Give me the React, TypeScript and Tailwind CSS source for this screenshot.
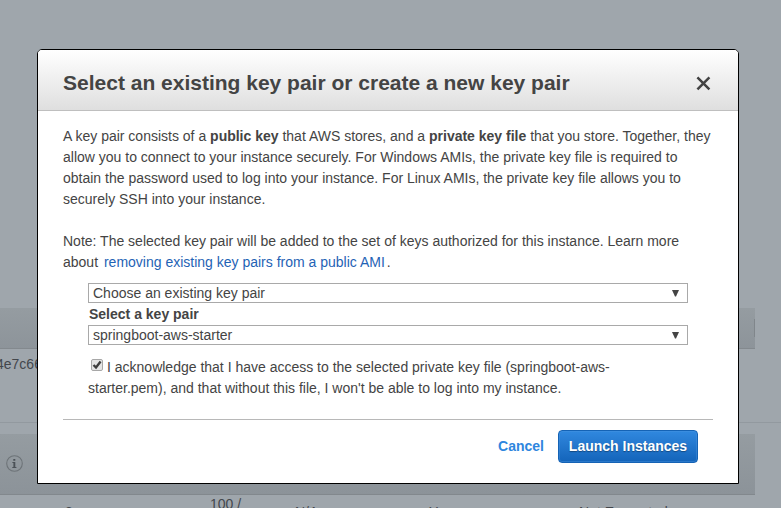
import React from 'react';

const cellText = 'whitespace-nowrap text-[14px] leading-4 text-[#43474c]';

function Backdrop() {
  return (
    <div className="flex h-full flex-col bg-[#9fa6ac]">
      <div className="h-[308px] shrink-0" />
      <div className="flex h-[41px] w-[755px] shrink-0 items-center justify-end border-b border-[#83898e] bg-gradient-to-b from-[#959ca1] to-[#8d949a]">
        <div className="h-[18px] w-px bg-[#80868b]" />
      </div>
      <div className="h-[74px] shrink-0 border-b border-[#92999f] pt-[7px]">
        <div className={`${cellText} -ml-[4px]`}>4e7c66</div>
      </div>
      <div className="h-[11px] shrink-0" />
      <div className="h-[61px] w-[755px] shrink-0 border-b border-[#82888d] bg-gradient-to-b from-[#959ca1] to-[#8c9399] pl-[6px] pt-[21px]">
        <svg width="17" height="17" viewBox="0 0 17 17">
          <circle cx="8.5" cy="8.5" r="7.8" fill="none" stroke="#6d7378" strokeWidth="1.1" />
          <path d="M7.3 4h2v1.8h-2zM6.4 6.9h2.9v5h1.1V13H6.3v-1.1h1.1V8h-1z" fill="#4b5157" />
        </svg>
      </div>
      <div className="grid min-h-0 flex-1 grid-cols-[65px_145px_85px_134px_150px_1fr] overflow-hidden">
        <span />
        <span className={`${cellText} pt-[9px]`}>8</span>
        <span className={`${cellText} pt-px`}>100 /</span>
        <span className={`${cellText} pt-[9px]`}>N/A</span>
        <span className={`${cellText} pt-[9px]`}>Yes</span>
        <span className={`${cellText} pt-[9px]`}>Not Encrypted</span>
      </div>
    </div>
  );
}

function SelectBox({ value }: { value: string }) {
  return (
    <div className="flex h-5 w-[600px] items-center justify-between border border-[#a9a9a9] bg-white pl-1 pr-2 text-[14px] leading-[18px]">
      <span>{value}</span>
      <svg width="7" height="8" viewBox="0 0 7 8">
        <path d="M0 1h7L4 7.5H3z" fill="#444" />
      </svg>
    </div>
  );
}

export default function App() {
  return (
    <div className="relative h-[508px] w-[781px] overflow-hidden font-['Liberation_Sans',Arial,sans-serif] text-[#444]">
      <Backdrop />
      <div role="dialog" className="absolute left-[37px] top-[49px] flex h-[435px] w-[702px] flex-col overflow-hidden rounded-t-[5px] border border-black bg-white">
        <header className="flex h-[61px] shrink-0 items-center justify-between border-b border-[#bfbfbf] bg-gradient-to-b from-white to-[#dfdfdf] pl-[25px] pr-[27px] pt-[6px]">
          <h1 className="whitespace-nowrap text-[21px] font-bold leading-6">Select an existing key pair or create a new key pair</h1>
          <svg className="mt-px" width="15" height="15" viewBox="0 0 15 15">
            <path d="M1.4 1.4l12 12M13.4 1.4l-12 12" stroke="#444" strokeWidth="2.5" />
          </svg>
        </header>
        <div className="px-[25px] pt-[15px] text-[14px] leading-[21px]">
          <p className="whitespace-nowrap">
            A key pair consists of a <b>public key</b> that AWS stores, and a <b>private key file</b> that you store. Together, they<br />
            allow you to connect to your instance securely. For Windows AMIs, the private key file is required to<br />
            obtain the password used to log into your instance. For Linux AMIs, the private key file allows you to<br />
            securely SSH into your instance.
          </p>
          <p className="mt-[21px] whitespace-nowrap">
            Note: The selected key pair will be added to the set of keys authorized for this instance. Learn more<br />
            about <a className="ml-[2px] mr-[2px] text-[#1f63b5]">removing existing key pairs from a public AMI</a>.
          </p>
          <div className="ml-[25px] mt-[10px]">
            <SelectBox value="Choose an existing key pair" />
            <div className="h-[22px] pl-px font-bold leading-[22px]">Select a key pair</div>
            <SelectBox value="springboot-aws-starter" />
            <div className="mt-[12px] whitespace-nowrap">
              <svg className="ml-[3px] mr-[4px] inline-block align-[1px]" width="12" height="12" viewBox="0 0 12 12">
                <rect x=".5" y=".5" width="11" height="11" rx="1.5" fill="#e4e4e4" stroke="#a7a7a7" />
                <path d="M2.5 6l2.5 2.5 4.6-6" fill="none" stroke="#3d3d3d" strokeWidth="2.3" />
              </svg>
              I acknowledge that I have access to the selected private key file (springboot-aws-<br />
              starter.pem), and that without this file, I won't be able to log into my instance.
            </div>
          </div>
          <footer className="mt-[20px] flex items-center justify-end border-t border-[#b8b8b8] pr-[15px] pt-[10px] font-bold">
            <button className="mr-[14px] text-[#2e86de]">Cancel</button>
            <button className="h-[33px] w-[140px] whitespace-nowrap rounded-[4px] border border-[#1563b5] bg-gradient-to-b from-[#3088df] to-[#1364ba] text-white shadow-[inset_0_0_0_1px_rgba(76,151,226,0.4)] [text-shadow:0_1px_1px_rgba(0,0,0,0.35)]">Launch Instances</button>
          </footer>
        </div>
      </div>
    </div>
  );
}
